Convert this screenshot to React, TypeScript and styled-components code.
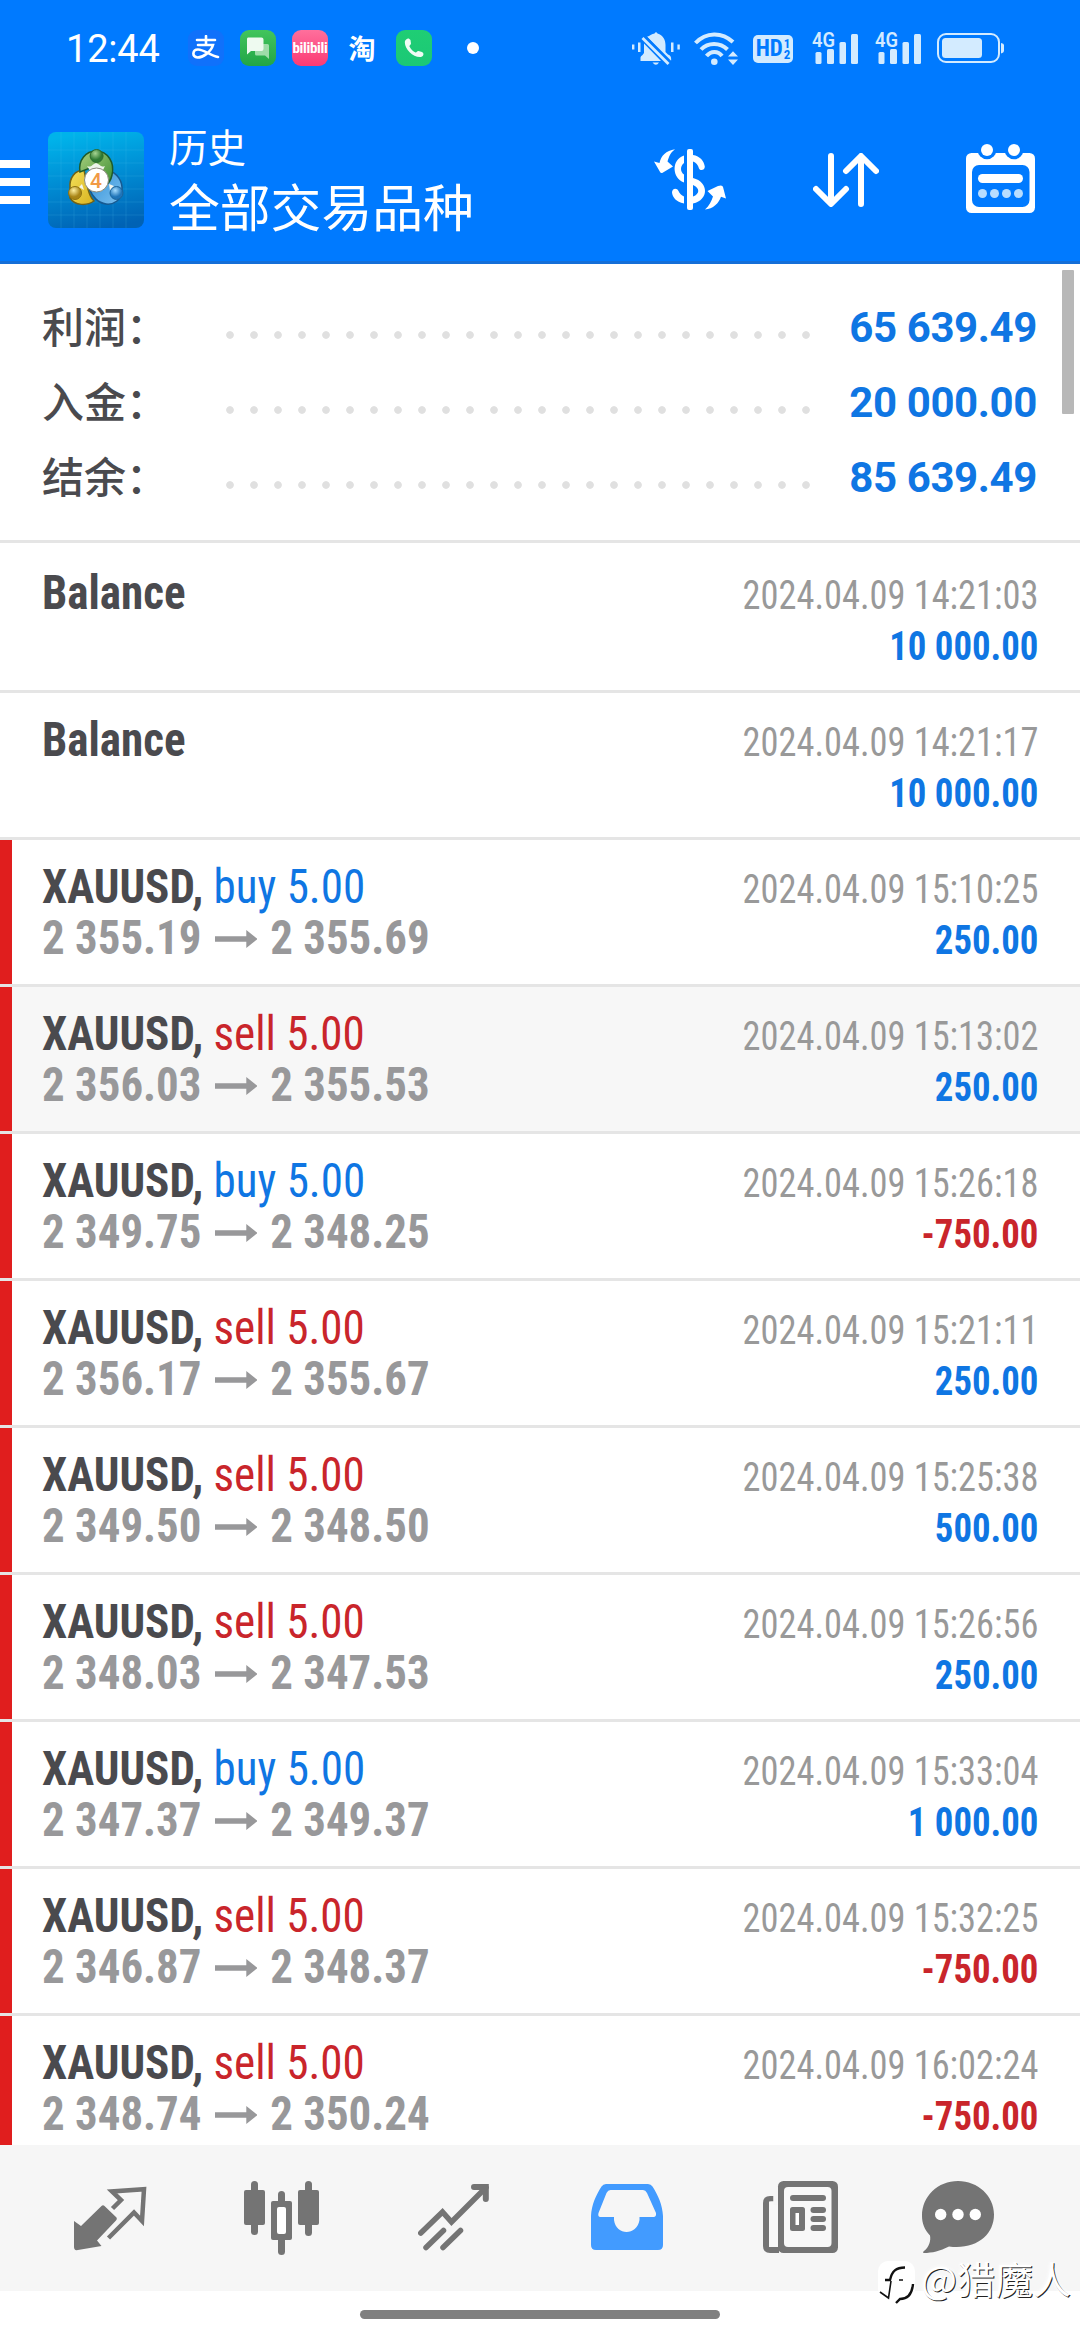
import React from "react";
import styled, { createGlobalStyle } from "styled-components";

const BLUE = "#007aff";
const VALUE = "#0f76e3";
const LOSS = "#c9252b";
const NAV = "#747474";
const STATUS = "#d3ebff";

const Global = createGlobalStyle`
  * { box-sizing: border-box; }
  body { margin: 0; background: #fff; }
`;

const Screen = styled.div`
  width: 1080px;
  height: 2340px;
  display: flex;
  flex-direction: column;
  overflow: hidden;
  position: relative;
  background: #fff;
  font-family: Roboto, "Noto Sans CJK SC", sans-serif;
`;

const Top = styled.header`
  height: 264px;
  background: ${BLUE};
  border-bottom: 3px solid #146fd8;
  color: #fff;
  display: flex;
  flex-direction: column;
`;

const StatusBar = styled.div`
  height: 96px;
  display: flex;
  align-items: center;
  padding: 0 76px 0 66px;
`;

const Clock = styled.div`
  width: 122px;
  font-size: 38px;
  line-height: 44px;
  padding-top: 2px;
  letter-spacing: -0.2px;
  font-family: Roboto, sans-serif;
`;

const Tiles = styled.div`
  display: flex;
  gap: 16px;
  flex: 1;
  align-items: center;
`;

const Tile = styled.div<{ $bg: string }>`
  width: 36px;
  height: 36px;
  border-radius: 9px;
  background: ${(p) => p.$bg};
  display: flex;
  align-items: center;
  justify-content: center;
  color: #fff;
  font-weight: 700;
  font-size: 27px;
  line-height: 36px;
  font-family: "Noto Sans CJK SC", sans-serif;
`;

const TinyWord = styled.span`
  font: 700 15px/36px "Roboto", sans-serif;
  font-stretch: 75%;
  letter-spacing: -0.3px;
`;

const Dot = styled.div`
  width: 12px;
  height: 12px;
  border-radius: 50%;
  background: #fff;
  margin-left: 19px;
`;

const StatusIcons = styled.div`
  display: flex;
  align-items: center;
`;

const Slot = styled.div<{ $gap: number }>`
  margin-left: ${(p) => p.$gap}px;
  display: flex;
`;

const HdBadge = styled.div`
  width: 40px;
  height: 28px;
  border-radius: 5px;
  background: ${STATUS};
  color: ${BLUE};
  margin-top: 2px;
  display: flex;
  align-items: center;
  justify-content: center;
  gap: 1px;
  font: 700 23px/28px "Roboto Condensed", Roboto, sans-serif;
  font-stretch: 75%;
`;

const HdStack = styled.div`
  display: flex;
  flex-direction: column;
  font-size: 13px;
  line-height: 11px;
`;

const SignalSvg = styled.svg`
  overflow: visible;
`;

const TitleBar = styled.div`
  height: 165px;
  display: flex;
  align-items: flex-start;
`;

const Burger = styled.div`
  width: 30px;
  margin: 64px 18px 0 0;
  display: flex;
  flex-direction: column;
  gap: 10px;
  & > i { display: block; height: 8px; background: #fff; }
`;

const Logo = styled.svg`
  width: 96px;
  height: 96px;
  margin-top: 36px;
`;

const Titles = styled.div`
  margin: 21px 0 0 25px;
  flex: 1;
  font-family: "Noto Sans CJK SC", sans-serif;
  font-weight: 400;
`;

const Subtitle = styled.div`
  font-size: 38.5px;
  line-height: 56px;
`;

const Title = styled.div`
  font-size: 50.8px;
  line-height: 64px;
`;

const Actions = styled.div`
  display: flex;
  padding: 48px 45px 0 0;
  height: 165px;
`;

const Action = styled.svg<{ $gap?: number; $drop?: number }>`
  margin-left: ${(p) => p.$gap || 0}px;
  margin-top: ${(p) => p.$drop || 0}px;
  display: block;
`;

const Content = styled.main`
  height: 1881px;
  overflow: hidden;
`;

const Summary = styled.section`
  height: 279px;
  border-bottom: 3px solid #e5e5e5;
  padding: 25px 43px 0 42px;
`;

const SummaryRow = styled.div`
  height: 75px;
  display: flex;
  align-items: center;
`;

const SummaryLabel = styled.div`
  width: 184px;
  font: 500 42px/71px "Noto Sans CJK SC", sans-serif;
  padding-bottom: 4px;
  color: #4a4a4e;
`;

const Leader = styled.div`
  width: 600px;
  height: 8px;
  margin-top: 17px;
  background: radial-gradient(circle at 4px 4px, #e0e0e0 3.4px, transparent 4.2px) 0 0 / 24px 8px;
`;

const SummaryValue = styled.div`
  flex: 1;
  text-align: right;
  white-space: nowrap;
  font: 700 42px/75px Roboto, sans-serif;
  letter-spacing: -0.4px;
  padding-top: 1px;
  color: ${VALUE};
`;

const Row = styled.article<{ $active: boolean; $first: boolean }>`
  height: ${(p) => (p.$first ? 150 : 147)}px;
  padding-top: ${(p) => (p.$first ? 3 : 0)}px;
  border-bottom: 3px solid #e5e5e5;
  background: ${(p) => (p.$active ? "#f7f7f7" : "#fff")};
  display: flex;
  font-family: "Roboto Condensed", Roboto, sans-serif;
  font-stretch: 75%;
`;

const Stripe = styled.div<{ $on: boolean }>`
  width: 12px;
  background: ${(p) => (p.$on ? "#e01e1e" : "transparent")};
`;

const Left = styled.div`
  flex: 1;
  padding: 21px 0 0 30px;
  font-size: 48px;
  line-height: 51px;
  white-space: nowrap;
`;

const Heading = styled.div`
  font-weight: 700;
  color: #4a4a4e;
  transform: scaleX(0.938);
  transform-origin: left;
`;

const Side = styled.span<{ $sell: boolean }>`
  font-weight: 400;
  color: ${(p) => (p.$sell ? LOSS : VALUE)};
`;

const Prices = styled.div`
  display: flex;
  align-items: center;
  font-weight: 700;
  color: #98989a;
  transform: scaleX(0.935);
  transform-origin: left;
  & > svg { margin: 2px 14px 0 14px; }
`;

const Right = styled.div`
  padding: 24px 42px 0 0;
  font-size: 40px;
  line-height: 51px;
  text-align: right;
  white-space: nowrap;
`;

const Time = styled.div`
  color: #999;
  transform: scaleX(0.909);
  transform-origin: right;
`;

const Amount = styled.div<{ $loss: boolean }>`
  font-weight: 700;
  color: ${(p) => (p.$loss ? LOSS : VALUE)};
  transform: scaleX(0.919);
  transform-origin: right;
`;

const ScrollThumb = styled.div`
  position: absolute;
  left: 1062px;
  top: 270px;
  width: 12px;
  height: 144px;
  border-radius: 1px;
  background: #b8b8b8;
`;

const NavBar = styled.nav`
  height: 146px;
  background: #f6f6f6;
  padding: 36px 0 0 74px;
  display: flex;
`;

const NavIcon = styled.svg<{ $gap?: number }>`
  width: 75px;
  height: 75px;
  margin-left: ${(p) => p.$gap || 0}px;
  display: block;
`;

const Gesture = styled.footer`
  height: 49px;
  display: flex;
  justify-content: center;
  padding-top: 19px;
  &::after {
    content: "";
    width: 360px;
    height: 9px;
    border-radius: 5px;
    background: #808080;
  }
`;

const Watermark = styled.div`
  position: absolute;
  left: 878px;
  top: 2257px;
  display: flex;
  gap: 5px;
  white-space: nowrap;
  color: #fff;
  font: 400 38px/42px "Noto Sans CJK SC", sans-serif;
  text-shadow: 1px 1px 0 #222, 0 0 4px #fff;
`;

type Entry = {
  side?: "buy" | "sell";
  from?: string;
  to?: string;
  time: string;
  amount: string;
  active?: boolean;
};

const summary = [
  ["利润：", "65 639.49"],
  ["入金：", "20 000.00"],
  ["结余：", "85 639.49"],
];

const entries: Entry[] = [
  { time: "2024.04.09 14:21:03", amount: "10 000.00" },
  { time: "2024.04.09 14:21:17", amount: "10 000.00" },
  { side: "buy", from: "2 355.19", to: "2 355.69", time: "2024.04.09 15:10:25", amount: "250.00" },
  { side: "sell", from: "2 356.03", to: "2 355.53", time: "2024.04.09 15:13:02", amount: "250.00", active: true },
  { side: "buy", from: "2 349.75", to: "2 348.25", time: "2024.04.09 15:26:18", amount: "-750.00" },
  { side: "sell", from: "2 356.17", to: "2 355.67", time: "2024.04.09 15:21:11", amount: "250.00" },
  { side: "sell", from: "2 349.50", to: "2 348.50", time: "2024.04.09 15:25:38", amount: "500.00" },
  { side: "sell", from: "2 348.03", to: "2 347.53", time: "2024.04.09 15:26:56", amount: "250.00" },
  { side: "buy", from: "2 347.37", to: "2 349.37", time: "2024.04.09 15:33:04", amount: "1 000.00" },
  { side: "sell", from: "2 346.87", to: "2 348.37", time: "2024.04.09 15:32:25", amount: "-750.00" },
  { side: "sell", from: "2 348.74", to: "2 350.24", time: "2024.04.09 16:02:24", amount: "-750.00" },
];

const Signal = () => (
  <SignalSvg width="46" height="33" viewBox="0 0 46 33" fill={STATUS}>
    <text x="0" y="14.8" fontSize="20.500" fontWeight="600" textLength="23" lengthAdjust="spacingAndGlyphs" fontFamily="Roboto, sans-serif">4G</text>
    <rect x="3.5" y="20" width="6" height="12" rx="1.5" />
    <rect x="15" y="17" width="7" height="15" rx="1.5" />
    <rect x="27.5" y="10" width="6.5" height="22" rx="1.5" />
    <rect x="39" y="2" width="7" height="30" rx="1.5" />
  </SignalSvg>
);

const AppLogo = () => (
  <Logo viewBox="0 0 96 96">
    <defs>
      <linearGradient id="tile" x1="0.4" y1="0" x2="0.6" y2="1">
        <stop offset="0" stopColor="#00b3ea" />
        <stop offset="0.5" stopColor="#008ad2" />
        <stop offset="1" stopColor="#0062b4" />
      </linearGradient>
      <linearGradient id="green" x1="0" y1="0" x2="1" y2="1"><stop offset="0" stopColor="#a8cf7e" /><stop offset="1" stopColor="#3d8f33" /></linearGradient>
      <linearGradient id="gold" x1="0" y1="0" x2="1" y2="1"><stop offset="0" stopColor="#f3e05a" /><stop offset="1" stopColor="#d9b21f" /></linearGradient>
      <linearGradient id="azure" x1="0" y1="0" x2="1" y2="1"><stop offset="0" stopColor="#2f8fd8" /><stop offset="1" stopColor="#7cc0ee" /></linearGradient>
      <radialGradient id="greenHead" cx="0.4" cy="0.3"><stop offset="0" stopColor="#a6d492" /><stop offset="1" stopColor="#2f7a33" /></radialGradient>
      <radialGradient id="goldHead" cx="0.4" cy="0.3"><stop offset="0" stopColor="#fff0a0" /><stop offset="1" stopColor="#a98516" /></radialGradient>
      <radialGradient id="azureHead" cx="0.4" cy="0.3"><stop offset="0" stopColor="#a5dcff" /><stop offset="1" stopColor="#1f74b8" /></radialGradient>
    </defs>
    <rect width="96" height="96" rx="8" fill="url(#tile)" />
    <path d="M0 18H96M0 31H96M0 44H96M0 57H96M0 70H96M0 83H96M13 0V96M26 0V96M39 0V96M52 0V96M65 0V96M78 0V96" stroke="#5fd0f5" strokeOpacity="0.16" strokeWidth="1" />
    <path d="M60 38C69 41 75 49 74 59C73 68 66 73 58 72C50 71 44 64 42 58L58 54Z" fill="url(#azure)" stroke="#175a91" strokeWidth="1.5" />
    <path d="M36 38C27 38 21 46 22 56L22 66C27 74 39 74 46 69C42 65 41 61 40 57Z" fill="url(#gold)" stroke="#6f6118" strokeWidth="1.5" />
    <path d="M32 40C30 28 38 19 48 19C60 19 67 31 64 43C63 48 60 52 57 53L52 37L42 36Z" fill="url(#green)" stroke="#1e5b2a" strokeWidth="1.5" />
    <path d="M39 34C44 36 44 32 48 31C52 32 53 36 57 34L54 40H43Z" fill="#eef4ea" />
    <path d="M61 52L66 54L62 59Z M34 52L31 55L36 58Z" fill="#f4f6ee" />
    <circle cx="48.600" cy="24" r="6.500" fill="url(#greenHead)" stroke="#2c6b2e" />
    <circle cx="27" cy="61" r="6.500" fill="url(#goldHead)" stroke="#8f7111" />
    <circle cx="68.500" cy="61" r="6.500" fill="url(#azureHead)" stroke="#1c649b" />
    <circle cx="48.500" cy="48" r="12" fill="#fff" stroke="#8a8a7c" strokeWidth="1" />
    <text x="48" y="55.500" textAnchor="middle" fontSize="21" fontFamily="Roboto, sans-serif" fontWeight="500" fill="#f19a45">4</text>
  </Logo>
);

export default function App() {
  return (
    <Screen>
      <Global />
      <Top>
        <StatusBar>
          <Clock>12:44</Clock>
          <Tiles>
            <Tile $bg="#1071fb">
              <svg width="28" height="26" viewBox="0 0 28 26" fill="none" stroke="#fff" strokeWidth="2.6" strokeLinecap="round">
                <path d="M5 5H23M14 1V9.500M6 10H21C19 17 11 22.500 5.500 22.500C-0.500 21.500 0.500 14.500 6 14.500C12 14.500 18 20.500 26 22" />
              </svg>
            </Tile>
            <Tile $bg="linear-gradient(#42c55c, #22a546)">
              <svg width="24" height="22" viewBox="0 0 24 22">
                <path d="M9 7H21.500Q23 7 23 8.500V22L19 18.500H10.500Q9 18.500 9 17Z" fill="#9edca9" />
                <path d="M2 0.500H15.500Q17.500 0.500 17.500 2.500V12Q17.500 14 15.500 14H5L1 17.500V2Q1 0.500 2 0.500Z" fill="#eefaf0" />
              </svg>
            </Tile>
            <Tile $bg="linear-gradient(#ff6f9c, #fb3a74)"><TinyWord>bilibili</TinyWord></Tile>
            <Tile $bg="transparent">淘</Tile>
            <Tile $bg="linear-gradient(#1fce74, #1bc876)">
              <svg width="20" height="20" viewBox="0 0 20 20">
                <path d="M1 3C2.500 0 5 -0.500 6.500 2L7 5.500C7 7 5 7.500 5.500 8.500C7 11.500 9 13.500 11.500 14.500C12.800 14.700 13 12.800 14.500 13L18 14C20.500 15.500 19.500 18 17 19C9 20 -0.500 10 1 3Z" fill="#effcf5" />
              </svg>
            </Tile>
            <Dot />
          </Tiles>
          <StatusIcons>
            <svg width="48" height="33" viewBox="0 0 48 33" fill={STATUS}>
              <path d="M17 4C20 2 22 1.800 22.500 1.500Q24 -0.800 25.500 1.500C31 3 33.500 8 33.500 13V20L36 22.500C39 23.500 39.500 26 39 29H38L15 4.800Z" />
              <path d="M12 11.500L29 29H8.500V25.500Q8.500 24 10.500 23L12 21Z" />
              <path d="M20.500 30.500H27Q24 35 20.500 30.500Z" />
              <path d="M10.500 6L36.500 32" stroke={STATUS} strokeWidth="2.800" />
              <path d="M13 4L39 30" stroke={BLUE} strokeWidth="1.800" />
              <rect y="12.500" width="2.400" height="5" /><rect x="6" y="10.500" width="2.500" height="9.500" />
              <rect x="39" y="10.500" width="2.500" height="9.500" /><rect x="45.400" y="12.500" width="2.400" height="5" />
            </svg>
            <Slot $gap={14}>
              <svg width="44" height="33" viewBox="0 0 44 33">
                <g fill="none" stroke={STATUS} strokeWidth="4">
                  <path d="M1.500 11C12 -0.300 28 -0.300 39 10" />
                  <path d="M7 17.500C14 10 26 10 33.500 17.500" />
                  <path d="M12.500 24C17 18.500 24 18.500 28 24" />
                </g>
                <circle cx="20.300" cy="29.700" r="3.300" fill={STATUS} />
                <path d="M39 19.300L44 24.500H34ZM39 33L44 27.500H34Z" fill={STATUS} />
              </svg>
            </Slot>
            <Slot $gap={15}>
              <HdBadge>HD<HdStack><span>1</span><span>2</span></HdStack></HdBadge>
            </Slot>
            <Slot $gap={19}><Signal /></Slot>
            <Slot $gap={17}><Signal /></Slot>
            <Slot $gap={16}>
              <svg width="67" height="32" viewBox="0 0 67 32">
                <rect x="1" y="2" width="61" height="28" rx="8" fill="none" stroke={STATUS} strokeWidth="2" />
                <rect x="5" y="6" width="40" height="20" rx="3.500" fill={STATUS} />
                <path d="M64 11Q67 11.500 67 13V19Q67 20.500 64 21.500Z" fill={STATUS} />
              </svg>
            </Slot>
          </StatusIcons>
        </StatusBar>
        <TitleBar>
          <Burger><i /><i /><i /></Burger>
          <AppLogo />
          <Titles>
            <Subtitle>历史</Subtitle>
            <Title>全部交易品种</Title>
          </Titles>
          <Actions>
            <Action $drop={5} width="72" height="61" viewBox="0 0 72 61" fill="#fff">
              <path d="M21 0.300C16 4 15 8 13.500 12.500L19 17.500L9 23.500Q6.500 25 5.500 22L0 12.500L5.500 14C7 7 12 1.500 21 0.300Z" />
              <path d="M51 60.500C55 57 57.500 52 59 47.500L53.500 42L64 37Q68.500 35.500 69 38L72 49.500L67 47.700C65 54 59 60 51 60.500Z" />
              <rect x="33" y="0" width="6" height="61" rx="2" />
              <path d="M30 6.500C17 11 18 29 30 33.500V25.500C26 23 26 17 30 14Z" />
              <path d="M39 6C46 7 50 12 50.800 17.500C51 21 46.500 22.500 45 19.500C44 16 42 13.500 39 12.500Z" />
              <path d="M39 29C55 33 55 51 39 54.500V47.500C46 45 46 39 39 36Z" />
              <path d="M30 54.500C22 53 18.500 48 18 43.500C18 39 23 38.500 24.500 42C25.500 44.500 27.500 46.500 30 47.500Z" />
            </Action>
            <Action $gap={87} $drop={9} width="66" height="54" viewBox="0 0 66 54" fill="none" stroke="#fff" strokeWidth="6" strokeLinecap="round" strokeLinejoin="round">
              <path d="M18 3V50.500M3 36L18 51L33 36M48 51V3.500M33 18L48 3L63 18" />
            </Action>
            <Action $gap={87} width="69" height="69" viewBox="0 0 69 69" fill="#fff">
              <rect y="9" width="69" height="60" rx="5.500" />
              <g fill={BLUE}>
                <circle cx="21" cy="6" r="9.300" /><circle cx="48" cy="6" r="9.300" />
                <rect x="6" y="21" width="57.500" height="42" rx="7" />
              </g>
              <circle cx="21" cy="6" r="6" /><circle cx="48" cy="6" r="6" />
              <rect x="12" y="30" width="45" height="9" rx="4.500" />
              <g fill="#b8ddff">
                <circle cx="16.500" cy="49.500" r="4.500" /><circle cx="28.500" cy="49.500" r="4.500" />
                <circle cx="40.500" cy="49.500" r="4.500" /><circle cx="52.500" cy="49.500" r="4.500" />
              </g>
            </Action>
          </Actions>
        </TitleBar>
      </Top>
      <Content>
        <Summary>
          {summary.map(([label, value]) => (
            <SummaryRow key={label}>
              <SummaryLabel>{label}</SummaryLabel>
              <Leader />
              <SummaryValue>{value}</SummaryValue>
            </SummaryRow>
          ))}
        </Summary>
        {entries.map((e, i) => (
          <Row key={e.time} $active={!!e.active} $first={i === 0}>
            <Stripe $on={!!e.side} />
            <Left>
              {e.side ? (
                <>
                  <Heading>XAUUSD, <Side $sell={e.side === "sell"}>{e.side} 5.00</Side></Heading>
                  <Prices>
                    {e.from}
                    <svg width="45.500" height="18" viewBox="0 0 45.500 18" fill="#98989a">
                      <path d="M0 6.300H33.500V0L45.500 9L33.500 18V11.700H0Z" />
                    </svg>
                    {e.to}
                  </Prices>
                </>
              ) : (
                <Heading>Balance</Heading>
              )}
            </Left>
            <Right>
              <Time>{e.time}</Time>
              <Amount $loss={e.amount.startsWith("-")}>{e.amount}</Amount>
            </Right>
          </Row>
        ))}
      </Content>
      <NavBar>
        <NavIcon viewBox="0 0 75 75" fill={NAV}>
          <path d="M0 40L7 45L27.500 25Q29 23.500 30.500 25L42.500 36.500Q43.500 38 42 39.500L23 59.500L27.500 65L2.500 69.200Q0 69 0 66Z" />
          <path d="M38.500 27.500L47 19L38 10.500L70 8.200L68 40L60 31.500L34.500 57" fill="none" stroke={NAV} strokeWidth="4.500" />
        </NavIcon>
        <NavIcon $gap={95} viewBox="0 0 75 75" fill={NAV}>
          <rect y="9" width="21" height="35" rx="2" /><rect x="7" y="0" width="7" height="54" rx="3.500" />
          <rect x="54" y="9" width="21" height="35" rx="2" /><rect x="61" y="0" width="7" height="55" rx="3.500" />
          <rect x="27" y="20" width="21" height="39" rx="2" /><rect x="34" y="10" width="7" height="64" rx="3.500" />
          <rect x="33" y="26" width="9" height="27" rx="2" fill="#fff" />
        </NavIcon>
        <NavIcon $gap={99} viewBox="0 0 75 75" fill="none" stroke={NAV} strokeWidth="5.500" strokeLinecap="round">
          <path d="M2.800 52L24.500 31L33.500 41L68 6.500" />
          <path d="M56 6H67.800V18" strokeWidth="6" />
          <path d="M8 66.500L25.500 49.500M25 66.500L42.500 49.500" />
        </NavIcon>
        <NavIcon $gap={98} viewBox="0 0 75 75" fill="#429bff">
          <path d="M0 35C0.500 24 5 14 10.500 5.500Q12 3 15 3H57Q60 3 61.500 5.500C67 14 71.500 24 72 35V64Q72 69 67 69H5Q0 69 0 64Z" />
          <path d="M19.500 9H52Q54.500 9 56 12L65 32Q65.500 36 62.500 36H48.500V39C46 55 25 55 23 39V36H9.500Q6.500 36 7.500 32L15.500 12Q17 9 19.500 9Z" fill="#f6f6f6" />
        </NavIcon>
        <NavIcon $gap={97} viewBox="0 0 75 75" fill={NAV}>
          <rect x="15" y="0" width="60" height="72" rx="5.500" />
          <path d="M10.500 15V20.500H6V66H16V72H7Q0 72 0 65V22Q0 15 7 15Z" />
          <rect x="6" y="20.500" width="9" height="45.500" rx="2" fill="#f8f8f8" />
          <rect x="10.500" y="14" width="4.500" height="10" fill="#f6f6f6" />
          <rect x="21" y="6" width="47.500" height="60" rx="4" fill="#f8f8f8" />
          <rect x="27" y="14" width="36" height="6" rx="3" />
          <rect x="27" y="26" width="15" height="24" rx="2.500" />
          <rect x="32.500" y="32" width="3.500" height="12" fill="#fff" />
          <rect x="47.500" y="26" width="15.500" height="6" rx="3" />
          <rect x="47.500" y="35" width="15.500" height="6" rx="3" />
          <rect x="47.500" y="44" width="15.500" height="6" rx="3" />
        </NavIcon>
        <NavIcon $gap={84} viewBox="0 0 75 75" fill={NAV}>
          <path d="M36 0C56 0 72 15 72 33.500C72 54 54 69 27 65.500C18 70 10 72 2 72Q0 71.500 2 70C7 66 9 60 8 54.500C2.500 49 0 42 0 35C0 15 16 0 36 0Z" />
          <g fill="#fff"><circle cx="18.700" cy="33.500" r="5.700" /><circle cx="36" cy="33.500" r="5.700" /><circle cx="53.300" cy="33.500" r="5.700" /></g>
        </NavIcon>
      </NavBar>
      <Gesture />
      <ScrollThumb />
      <Watermark>
        <svg width="38" height="48" viewBox="0 0 38 48">
          <rect x="0" y="4" width="37" height="38" rx="10" fill="#fff" />
          <g fill="none" stroke="#111" strokeWidth="2.400">
            <path d="M7 23H12C14 14 18 10.500 27 10.500" />
            <path d="M13 24L10.500 41L2 35M21 23H25" strokeWidth="1.600" />
            <path d="M35 27C34 38 29 42 22 42L18 46" />
          </g>
        </svg>
        @猎魔人
      </Watermark>
    </Screen>
  );
}
